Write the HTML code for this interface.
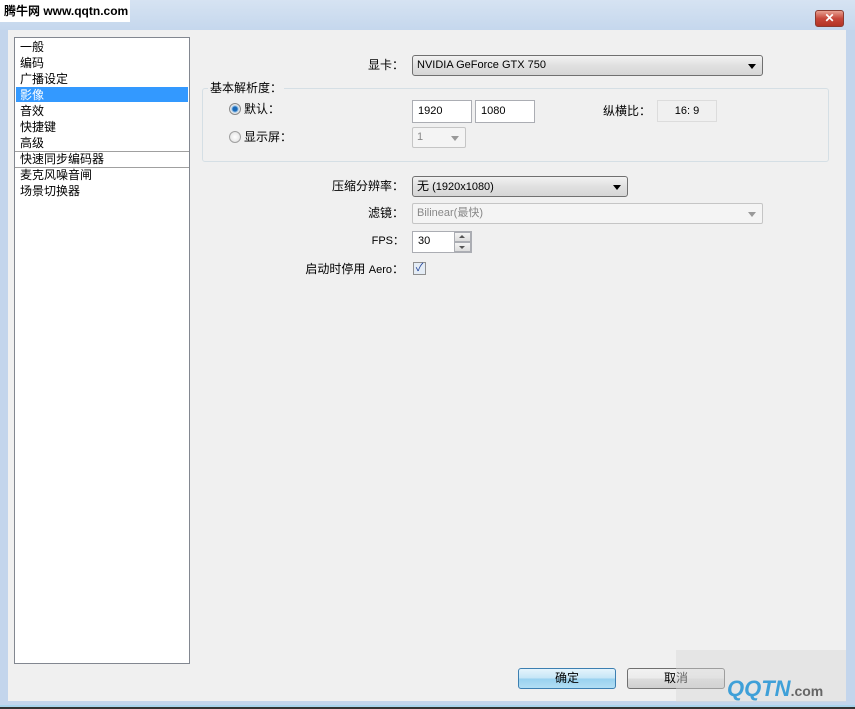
<!DOCTYPE html>
<html><head><meta charset="utf-8"><style>
*{margin:0;padding:0;box-sizing:border-box}
body{width:855px;height:709px;background:#c3d5ec;font-family:"Liberation Sans","Noto Sans CJK SC",sans-serif;font-size:12px;color:#000;position:relative;overflow:hidden}
.a{position:absolute}
.client{left:8px;top:30px;width:838px;height:671px;background:#f0f0f0}
.list{left:14px;top:37px;width:176px;height:627px;background:#fff;border:1px solid #828790}
.li{position:absolute;left:5px;height:16px;line-height:16px;font-size:12px}
.sep{position:absolute;left:0;right:0;height:1px;background:#a0a0a0}
.lbl{text-align:right;line-height:20px}
.box{background:#fff;border:1px solid #abadb3;line-height:20px;padding-left:5px;font-size:11px}
.combo{border:1px solid #707070;border-radius:3px;background:linear-gradient(#f2f2f2,#e0e0e0 50%,#d6d6d6);line-height:19px;padding-left:4px;font-size:11px}
.dis{border:1px solid #c5c5c5;border-radius:2px;background:#f4f4f4;color:#888;line-height:19px;padding-left:4px;font-size:11px}
.arr{position:absolute;right:6px;top:8px;width:0;height:0;border-left:4px solid transparent;border-right:4px solid transparent;border-top:5px solid #000}
.btn{border:1px solid #707070;border-radius:3px;background:linear-gradient(#f2f2f2,#ebebeb 50%,#dddddd 50%,#cfcfcf);text-align:center;line-height:19px}
</style></head><body>
<div class="a" style="left:0;top:0;width:855px;height:30px;background:linear-gradient(#d6e3f2,#c5d7ed)"></div>
<div class="a" style="left:0;top:0;width:130px;height:22px;background:#fff;font-weight:bold;font-size:12px;line-height:22px;padding-left:4px">腾牛网 www.qqtn.com</div>
<div class="a" style="left:815px;top:10px;width:29px;height:17px;border:1px solid #8a3a30;border-radius:3px;background:linear-gradient(#e8a090,#c7473a 50%,#b33324);color:#fff;text-align:center;font-weight:bold;font-size:12px;line-height:15px">✕</div>
<div class="a client"></div>
<div class="a" style="left:0;top:705px;width:855px;height:2px;background:#a9d4ec"></div>
<div class="a" style="left:0;top:707px;width:855px;height:2px;background:#333"></div>
<div class="a list">
<div class="li" style="top:1px">一般</div>
<div class="li" style="top:17px">编码</div>
<div class="li" style="top:33px">广播设定</div>
<div style="position:absolute;left:1px;top:49px;width:172px;height:15px;background:#3399ff"></div>
<div class="li" style="top:49px;color:#fff">影像</div>
<div class="li" style="top:65px">音效</div>
<div class="li" style="top:81px">快捷键</div>
<div class="li" style="top:97px">高级</div>
<div class="sep" style="top:113px"></div>
<div class="li" style="top:113px">快速同步编码器</div>
<div class="sep" style="top:129px"></div>
<div class="li" style="top:129px">麦克风噪音闸</div>
<div class="li" style="top:145px">场景切换器</div>
</div>

<div class="a lbl" style="left:300px;top:55px;width:104px">显卡：</div>
<div class="a combo" style="left:412px;top:55px;width:351px;height:21px">NVIDIA GeForce GTX 750<div class="arr"></div></div>

<div class="a" style="left:202px;top:88px;width:627px;height:74px;border:1px solid #d5dfe5;border-radius:3px"></div>
<div class="a" style="left:208px;top:80px;background:#f0f0f0;padding:0 2px;line-height:16px">基本解析度：</div>
<div class="a" style="left:229px;top:103px;width:12px;height:12px;border-radius:50%;border:1px solid #8a8a8a;background:radial-gradient(#1b6ab8 30%,#9cc6ea 45%,#e8e8e8 60%)"></div>
<div class="a" style="left:244px;top:99px;line-height:20px">默认：</div>
<div class="a" style="left:229px;top:131px;width:12px;height:12px;border-radius:50%;border:1px solid #a0a0a0;background:radial-gradient(#fff,#ddd)"></div>
<div class="a" style="left:244px;top:127px;line-height:20px">显示屏：</div>
<div class="a box" style="left:412px;top:100px;width:60px;height:23px">1920</div>
<div class="a box" style="left:475px;top:100px;width:60px;height:23px">1080</div>
<div class="a" style="left:603px;top:101px;line-height:20px">纵横比：</div>
<div class="a" style="left:657px;top:100px;width:60px;height:22px;border:1px solid #dcdcdc;background:#f0f0f0;text-align:center;line-height:20px;font-size:11px">16: 9</div>
<div class="a dis" style="left:412px;top:127px;width:54px;height:21px">1<div class="arr" style="border-top-color:#999"></div></div>

<div class="a lbl" style="left:290px;top:176px;width:114px">压缩分辨率：</div>
<div class="a combo" style="left:412px;top:176px;width:216px;height:21px"><span style="font-size:12px">无</span> (1920x1080)<div class="arr"></div></div>
<div class="a lbl" style="left:300px;top:203px;width:104px">滤镜：</div>
<div class="a dis" style="left:412px;top:203px;width:351px;height:21px">Bilinear(最快)<div class="arr" style="border-top-color:#999"></div></div>
<div class="a lbl" style="left:300px;top:231px;width:104px;font-size:11px">FPS：</div>
<div class="a box" style="left:412px;top:231px;width:60px;height:22px;line-height:18px">30</div>
<div class="a" style="left:454px;top:232px;width:17px;height:10px;border:1px solid #abadb3;background:linear-gradient(#f4f4f4,#dcdcdc)"><div style="position:absolute;left:4px;top:2px;border-left:3px solid transparent;border-right:3px solid transparent;border-bottom:3px solid #555"></div></div>
<div class="a" style="left:454px;top:242px;width:17px;height:10px;border:1px solid #abadb3;background:linear-gradient(#f4f4f4,#dcdcdc)"><div style="position:absolute;left:4px;top:3px;border-left:3px solid transparent;border-right:3px solid transparent;border-top:3px solid #555"></div></div>
<div class="a lbl" style="left:290px;top:259px;width:114px">启动时停用 <span style="font-size:11px">Aero</span>：</div>
<div class="a" style="left:413px;top:262px;width:13px;height:13px;border:1px solid #8f8f8f;background:#e4ecf5;color:#21449a;font-size:11px;line-height:11px;text-align:center">✓</div>

<div class="a btn" style="left:518px;top:668px;width:98px;height:21px;border-color:#3c7fb1;background:linear-gradient(#e5f4fc,#c4e5f6 50%,#98d1ef 50%,#b2def4)">确定</div>
<div class="a btn" style="left:627px;top:668px;width:98px;height:21px">取消</div>
<div class="a" style="left:676px;top:650px;width:170px;height:52px;background:rgba(215,215,215,0.45)"></div>
<div class="a" style="left:727px;top:676px;color:#3fa0d8;font-weight:bold;font-size:22px;font-style:italic;line-height:26px">QQTN<span style="font-size:14px;color:#666;font-style:normal">.com</span></div>
</body></html>
